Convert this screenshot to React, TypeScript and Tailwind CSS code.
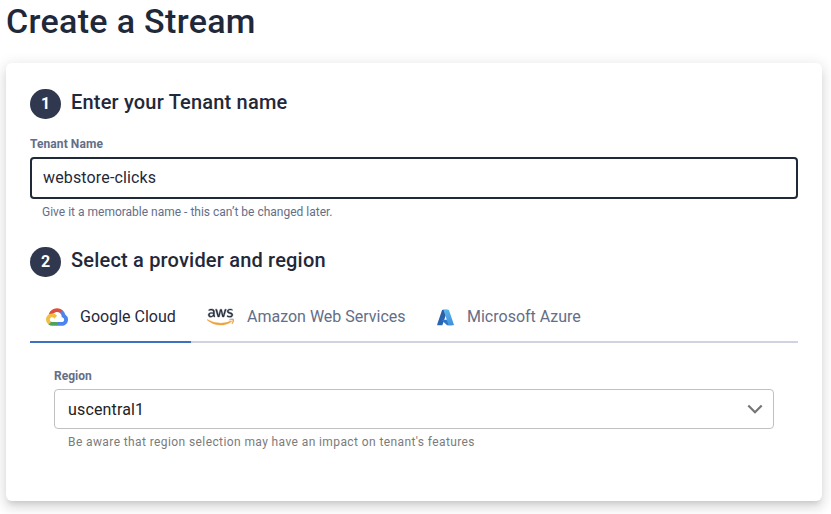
import type { ReactNode } from "react";
import { FaAws } from "react-icons/fa";

function GoogleCloudLogo() {
  return (
    <svg viewBox="0 0 256 206" className="h-[18px] w-[22px] shrink-0" aria-hidden="true">
      <path fill="#dc4f3d" d="M170.252 56.819l22.253-22.253 1.483-9.37C153.437-11.677 88.976-7.496 52.42 33.92 42.267 45.423 34.734 59.764 30.717 74.573l7.97-1.123 44.505-7.34 3.436-3.513c19.797-21.742 53.27-24.667 76.128-6.168l7.496.39z" />
      <path fill="#4c84ee" d="M224.205 73.918a100.249 100.249 0 0 0-30.217-48.722l-31.232 31.232a55.515 55.515 0 0 1 20.379 44.037v5.544c15.35 0 27.797 12.445 27.797 27.796 0 15.352-12.446 27.485-27.797 27.485h-55.671l-5.466 5.934v33.34l5.466 5.231h55.67c39.93.311 72.553-31.494 72.864-71.424a72.303 72.303 0 0 0-31.793-60.453" />
      <path fill="#4da35a" d="M71.87 205.796h55.593V161.29H71.87a27.275 27.275 0 0 1-11.4-2.498l-7.887 2.42-22.409 22.253-1.952 7.574a72.26 72.26 0 0 0 43.648 14.757" />
      <path fill="#f2be42" d="M71.87 61.425C31.94 61.664-.237 94.228.001 134.158a72.301 72.301 0 0 0 28.222 56.88l32.248-32.246c-13.99-6.322-20.208-22.786-13.887-36.776 6.32-13.99 22.786-20.208 36.775-13.888a27.796 27.796 0 0 1 13.887 13.888l32.248-32.248A72.224 72.224 0 0 0 71.87 61.425" />
    </svg>
  );
}

function AwsLogo() {
  return (
    <>
      <svg className="absolute size-0" aria-hidden="true">
        <linearGradient id="aws-fill" x1="0" y1="0" x2="0" y2="1">
          <stop offset="0.64" stopColor="#252f3e" />
          <stop offset="0.64" stopColor="#f0a03c" />
        </linearGradient>
      </svg>
      <FaAws
        className="h-[22px] w-[27px] shrink-0"
        fill="url(#aws-fill)"
        stroke="url(#aws-fill)"
        strokeWidth="8"
        aria-hidden="true"
      />
    </>
  );
}

function AzureLogo() {
  return (
    <svg viewBox="3 5 90 86" className="h-[17px] w-[17px] shrink-0" aria-hidden="true">
      <defs>
        <linearGradient id="azure-left" x1="0.7" y1="0" x2="0.3" y2="1">
          <stop offset="0" stopColor="#2d5d9e" />
          <stop offset="1" stopColor="#2966b8" />
        </linearGradient>
        <linearGradient id="azure-right" x1="0.3" y1="0" x2="0.7" y2="1">
          <stop offset="0" stopColor="#5ab5ec" />
          <stop offset="1" stopColor="#3f93dc" />
        </linearGradient>
      </defs>
      <path fill="url(#azure-left)" d="M33.338 6.544h26.038l-27.03 80.087a4.152 4.152 0 0 1-3.933 2.824H8.149a4.145 4.145 0 0 1-3.928-5.47L29.404 9.368a4.152 4.152 0 0 1 3.934-2.825z" />
      <path fill="#2f76c7" d="M71.175 60.261h-41.29a1.911 1.911 0 0 0-1.305 3.309l26.532 24.764a4.171 4.171 0 0 0 2.846 1.121h23.38z" />
      <path fill="url(#azure-right)" d="M66.595 9.364a4.145 4.145 0 0 0-3.928-2.82H33.648a4.146 4.146 0 0 1 3.928 2.82l25.184 74.62a4.146 4.146 0 0 1-3.928 5.472h29.02a4.146 4.146 0 0 0 3.927-5.472z" />
    </svg>
  );
}

function StepHeading({ step, children }: { step: number; children: ReactNode }) {
  return (
    <div className="flex h-[31px] gap-2.5">
      <span className="mt-px flex h-[30px] w-[31px] shrink-0 items-center justify-center rounded-full bg-[#2f384f] pb-px text-base font-bold text-white">
        {step}
      </span>
      <h2 className="text-xl leading-7 font-medium tracking-[0.19px] whitespace-nowrap">{children}</h2>
    </div>
  );
}

export default function App() {
  return (
    <main className="h-[514px] w-[831px] overflow-hidden bg-white pl-1.5 font-['Roboto',sans-serif] text-[#1f293a]">
      <h1 className="h-[63px] text-[34px] leading-[42px] font-medium tracking-[0.32px] whitespace-nowrap">Create a Stream</h1>

      <section className="flex h-[438px] w-[816px] flex-col rounded-md bg-white px-6 pt-[25px] shadow-[0_5px_5px_-3px_rgba(40,40,60,0.12),0_8px_10px_1px_rgba(40,40,60,0.05),0_3px_14px_2px_rgba(0,0,0,0.11)]">
        <StepHeading step={1}>Enter your Tenant name</StepHeading>

        <label className="mt-[17px] text-xs leading-4 font-bold tracking-[0.08px] text-[#646e87]">Tenant Name</label>
        <div className="mt-[5px] flex h-[42px] items-center rounded border-2 border-[#1f293a] px-[11px] text-base tracking-[0.15px]">
          webstore-clicks
        </div>
        <p className="mt-[5px] pl-3 text-xs leading-4 text-[#646e87]">Give it a memorable name - this can’t be changed later.</p>

        <div className="mt-[26px]">
          <StepHeading step={2}>Select a provider and region</StepHeading>
        </div>

        <div className="mt-[14px] flex h-[52px] border-b-2 border-[#d0d2df] text-base text-[#646e87]">
          <div className="-mb-0.5 flex w-[161px] items-center gap-3 border-b-2 border-[#3b72c0] pt-0.5 pl-4 whitespace-nowrap text-[#1f293a]">
            <GoogleCloudLogo />
            Google Cloud
          </div>
          <div className="flex w-[230px] items-center gap-[13px] pt-0.5 pl-4 whitespace-nowrap">
            <AwsLogo />
            Amazon Web Services
          </div>
          <div className="flex items-center gap-[13px] pt-0.5 pl-4 whitespace-nowrap">
            <AzureLogo />
            Microsoft Azure
          </div>
        </div>

        <div className="flex flex-col px-6 pt-[25px]">
          <label className="text-xs leading-4 font-bold text-[#646e87]">Region</label>
          <div className="mt-[5px] flex h-10 items-center justify-between rounded border border-[#c0c0c0] pr-2.5 pl-[13px] text-base tracking-[0.15px] text-[#222]">
            <span className="pt-0.5">uscentral1</span>
            <svg viewBox="0 0 16 10" className="h-2.5 w-4" fill="none" stroke="#757575" strokeWidth="2.2" aria-hidden="true">
              <path d="M1.3 1.5 8 8.2l6.7-6.7" />
            </svg>
          </div>
          <p className="mt-[5px] pl-[14px] text-xs leading-4 tracking-[0.4px] text-[#7b7b7b]">
            Be aware that region selection may have an impact on tenant's features
          </p>
        </div>
      </section>
    </main>
  );
}
